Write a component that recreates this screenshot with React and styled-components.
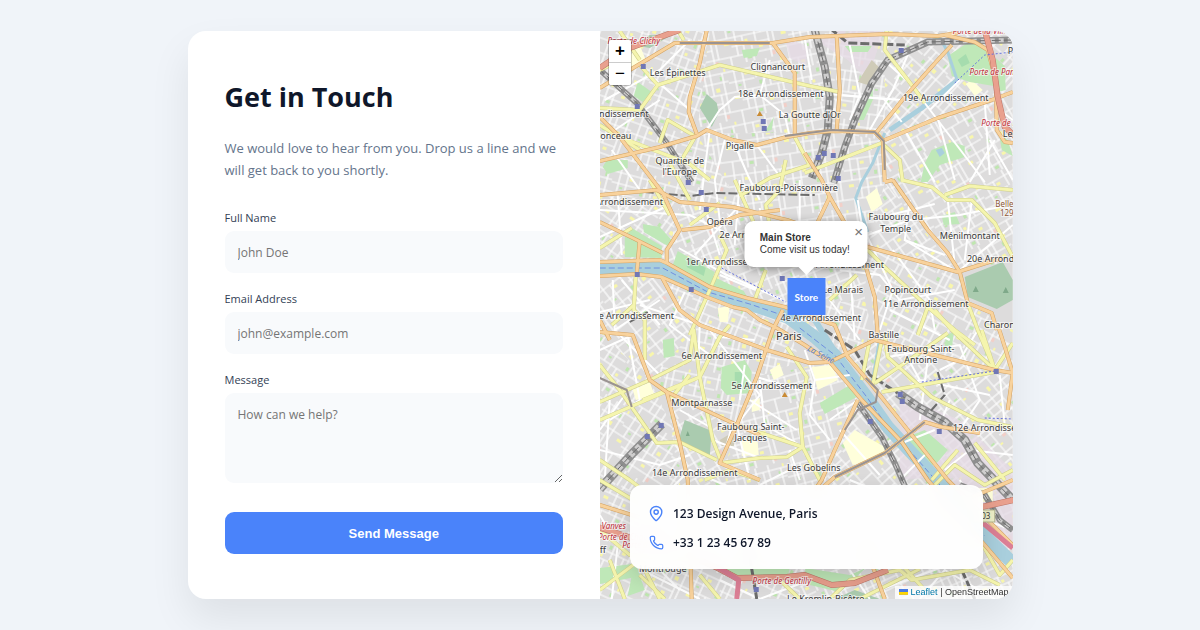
import React from 'react'
import styled, { createGlobalStyle } from 'styled-components'
import { MapPin, Phone } from 'lucide-react'

// roads and other map features, in map units
const majorRoads = [
  'M600 88L675 43L773 43L810 37L888 34L938 36L958 33',
  'M707 30L700 63L690 97L689 112L697 134',
  'M600 161L660 147L697 136L707 130L733 140L757 145L787 137L810 133L832 131L875 132L883 140L885 182',
  'M773 43L795 73L795 137',
  'M600 117L620 137L653 180L663 193L680 230L667 250L667 263',
  'M805 153L822 180L830 197L845 223M830 197L816 226',
  'M837 37L840 90L837 130',
  'M952 45L938 60L905 97L877 132',
  'M885 140L938 118L992 100L1013 92',
  'M945 35L975 42L988 50L996 80L997 130L1005 142L1013 143',
  'M600 195L657 190L680 202L733 207L787 220L868 247L958 272L1002 258',
  'M600 222L633 238L663 253M640 240L637 274',
  'M600 262L660 260L667 263L710 287L747 298L785 307L835 325L848 357L872 385L912 435L948 480L1013 545',
  'M600 276L637 274L662 277L707 297L733 307L747 310L760 320L777 328L805 345L830 362L862 400L902 442L928 480L985 545L1013 578',
  'M662 277L680 310L700 325L767 350L810 363L830 362L875 340L902 347L995 370L1013 373',
  'M682 230L710 227L740 215L780 210',
  'M893 180L928 230L948 253L960 272L968 303L992 313L997 330',
  'M865 263L875 297L878 335M885 182L893 180',
  'M600 332L633 335L650 380L667 392L733 423L760 435',
  'M667 392L680 443L688 480L692 600',
  'M783 310L773 330L757 377L737 425L720 463L760 480',
  'M858 400L835 450L822 480L815 490',
  'M820 490L835 477L885 453L925 422L942 427L980 433',
  'M998 325L1006 350L1013 373L1008 410',
  'M600 505L645 519M865 545L885 599M965 500L1013 480M600 320L610 340'
]
const minorRoads = [
  'M810 86L720 65L658 85L640 110L600 108M658 85L640 65M810 86L840 92',
  'M697 134L680 163M805 173L882 143L900 160L903 182',
  'M887 30L885 50L912 85L925 103M600 70L618 62M620 31L640 60',
  'M660 143L668 120L695 136M600 125L640 150M620 137L690 164L710 180',
  'M678 30L684 40M670 163L690 200M810 165L770 178L740 196',
  'M720 203L690 225M720 235L727 250L710 290L690 335',
  'M600 248L632 228M650 180L670 215M735 180L742 196L755 225',
  'M865 247L885 267L928 307L955 330L975 345M928 307L918 335',
  'M902 180L932 187L948 200L972 200L995 223L1013 257M945 195L970 186L1013 190',
  'M968 303L978 330L995 370L952 330L935 310M982 330L995 370L1013 343',
  'M600 402L650 380L690 360L694 330L700 377L713 440L722 463',
  'M600 420L700 377L720 337L730 325M600 365L620 390L657 443L680 442L717 460M643 400L700 377',
  'M722 463L760 458L787 457L803 447L800 413L807 377L787 347',
  'M600 460L630 480L650 495M803 447L820 480M670 400L690 375M737 425L803 447',
  'M885 333L888 357L932 397L978 420L1013 427M882 392L995 372M875 383L905 363L948 333',
  'M932 480L958 450M975 443L1005 480M870 340L862 380M882 340L873 385',
  'M636 276L634 310L645 320L645 360M634 305L612 325',
  'M600 480L650 510M600 530L630 555L690 560M640 575L665 599M600 590L640 560L660 599M610 560L625 599',
  'M700 575L720 599M830 599L850 580L900 570L912 580L970 570M860 599L920 569M905 568L925 590M970 570L1000 585M983 545L1000 575L1013 560',
  'M780 580L800 599M930 490L955 465L985 485L1013 470M705 480L730 470L760 480',
  'M770 225L766 205L780 190L786 160M795 137L810 165M857 275L830 300M766 270L755 300'
]
const streets = [
  'M600 140L660 100M612 150L640 190M640 66L690 110M690 40L660 70L605 100',
  'M707 130L720 110L735 97L760 95L785 115L790 137M735 97L800 92L840 95L884 99',
  'M725 140L715 180L720 220M733 140L748 175L760 200M757 145L790 190M770 60L760 95',
  'M710 130L700 210M805 38L812 80M850 45L860 95L850 120M884 99L902 122M840 95L902 100',
  'M925 103L985 182M960 80L930 110M938 118L955 180M985 102L990 175M995 140L970 182M905 130L935 182',
  'M884 60L912 85L905 97M870 130L893 90L910 50M1000 110L1013 120M990 140L1013 180',
  'M600 210L690 215L740 240M618 195L622 255M600 237L670 205M700 190L720 255M740 205L695 255',
  'M679 248L725 274L783 300M720 275L756 290M760 208L763 230M800 180L800 222M740 180L735 245',
  'M858 200L862 225L893 290L880 330M893 250L930 300L935 330M910 200L905 240L945 255M890 215L935 204',
  'M868 235L910 220L960 215L1010 205M905 240L958 272L1013 225M948 200L955 265M972 200L965 260',
  'M840 270L880 275L900 300L955 290M830 300L860 340M850 265L855 340M800 320L860 317M890 310L950 340',
  'M613 280L615 330L660 375M622 280L660 325M660 300L615 330M685 292L670 325L710 355M700 325L698 375',
  'M600 350L633 335M628 335L640 400L610 420M640 305L700 325M600 430L625 395M600 450L660 465L690 455',
  'M710 330L760 395L737 425M720 337L755 340M757 377L800 390M750 400L797 430M760 380L765 425L800 445',
  'M680 410L712 428M733 423L722 463M745 365L740 400M713 440L760 458M750 480L737 425M790 450L800 480',
  'M805 350L815 380L810 415L830 440M815 380L850 375M830 420L858 400M840 430L880 475M900 480L925 455',
  'M902 347L920 380L990 395M888 357L960 345L980 400L960 430M930 345L920 420M950 400L940 425',
  'M945 470L970 450L1013 455M905 442L935 430M1000 375L1005 425M920 380L898 393M978 330L960 360L940 370',
  'M600 515L618 545L612 599M640 569L700 599M650 560L680 590M720 580L760 599L810 580M850 570L870 599M880 590L940 568M920 599L945 570L995 599M960 570L965 599',
  'M610 400L605 480M650 510L690 470L760 500M760 485L790 470M850 480L900 500M960 480L985 520L1013 530M600 312L650 300'
]
const rails = [
  ['M598 68L637 103L667 143L692 182', 6],
  ['M815 30L825 67L830 97L828 130L822 153L812 178', 8],
  ['M1013 40L928 42L888 60L872 83L855 120L845 147L834 183', 7],
  ['M600 489L633 453L662 424', 9],
  ['M898 393L918 407L945 422L965 440L978 463L1013 500', 9],
  ['M858 403L882 437L895 463L906 488', 6],
  ['M960 485L985 495L1000 520L1013 530', 6],
  ['M830 28L848 43L905 45', 3],
  ['M938 372L945 395L930 412M630 322L648 312', 2],
  ['M645 192L690 196L715 193L815 195', 2],
  ['M825 330L855 350L870 375L898 393', 3],
  ['M962 570L975 599M748 545L757 599', 3]
]
const greens = [
  'M948 56L972 40L988 48L994 86L970 82L952 76Z',
  'M921 182L925 163L932 150L952 142L965 146L965 157L940 165L928 182Z',
  'M678 251L715 272L710 287L672 268Z',
  'M625 238L632 228L662 246L662 258L625 257Z',
  'M643 224L660 227L672 240L668 246L644 232Z',
  'M722 367L745 360L752 372L750 393L727 395L721 388Z',
  'M820 403L850 385L857 397L825 414Z',
  'M905 438L925 430L948 450L938 462L925 470Z',
  'M638 82L652 92L643 102L634 96Z',
  'M607 160L628 160L628 168L608 174L603 167Z',
  'M845 46L872 46L868 52L850 52Z',
  'M859 120L868 95L873 82L873 100L864 120Z',
  'M716 564L790 568L787 580L740 578Z',
  'M805 568L850 575L866 568L840 592L810 585Z',
  'M996 58L1005 66L1006 90L998 92Z',
  'M999 132L1008 140L1013 156L1002 150Z',
  'M942 216L955 212L960 224L944 225Z',
  'M600 568L632 564L636 577L600 584Z',
  'M628 596L635 560L645 590Z',
  'M742 50L760 48L757 56L744 58Z',
  'M663 340L674 338L675 356L664 358Z',
  'M706 290L748 298L744 291L712 276Z',
  'M946 335L954 332L952 350L945 350Z',
  'M765 132L774 117L772 130Z'
]
const cemeteries = [
  'M707 94L717 103L719 113L712 127L700 108Z',
  'M965 277L1003 262L1013 280L1013 300L997 309L985 304L968 297Z',
  'M685 420L712 431L710 456L679 440Z',
  'M835 599L855 590L880 599Z',
  'M635 45L650 35L670 36L650 48Z'
]
const campuses = [
  'M843 443L855 430L885 447L884 455L853 465Z',
  'M812 367L832 365L838 380L818 390Z',
  'M866 197L877 188L883 204L872 212Z',
  'M633 390L650 382L655 396L636 400Z',
  'M742 438L758 442L759 455L742 456Z',
  'M640 45L622 64L628 70L646 60Z',
  'M718 308L730 306L728 322L720 322Z',
  'M972 80L983 90L975 96L966 84Z',
  'M978 488L993 488L993 502L978 502Z',
  'M770 370L780 364L784 375L774 380Z',
  'M752 400L760 398L760 410L752 412Z'
]
const stations = [
  [643, 66], [637, 106], [763, 121], [764, 128], [901, 50], [818, 157], [824, 153], [833, 155],
  [688, 182], [701, 192], [706, 209], [637, 274], [691, 289], [838, 178], [647, 436], [661, 425],
  [900, 394], [902, 401], [870, 421], [939, 431], [996, 371], [756, 589], [782, 278]
]

// name, centre x, baseline y
const places = [
  ['Les Épinettes', 678, 76], ['Clignancourt', 778, 70], ['18e Arrondissement', 781, 97],
  ['La Goutte d\'Or', 810, 118], ['19e Arrondissement', 946, 101], ['17e Arrondissement', 606, 117],
  ['Monceau', 612, 139], ['Pigalle', 740, 149], ['Quartier de', 680, 164], ['l\'Europe', 680, 175],
  ['Faubourg-Poissonnière', 789, 191], ['8e Arrondissement', 623, 205], ['Opéra', 720, 225],
  ['2e Arrondissement', 760, 238], ['Faubourg du', 896, 220], ['Temple', 896, 232],
  ['Ménilmontant', 970, 239], ['20e Arrondissement', 1010, 262], ['1er Arrondissement', 728, 265],
  ['3e Arrondissement', 844, 268], ['Le Marais', 843, 293], ['Popincourt', 908, 293],
  ['11e Arrondissement', 926, 307], ['7e Arrondissement', 634, 319], ['4e Arrondissement', 821, 321],
  ['Charonne', 1005, 328], ['Bastille', 884, 338], ['Faubourg Saint-', 921, 352], ['Antoine', 921, 363],
  ['6e Arrondissement', 722, 359], ['5e Arrondissement', 772, 389], ['Montparnasse', 702, 406],
  ['Faubourg Saint-', 751, 430], ['Jacques', 751, 441], ['12e Arrondissement', 996, 431],
  ['Les Gobelins', 814, 471], ['14e Arrondissement', 695, 476], ['Montrouge', 663, 572],
  ['ff', 603, 553], ['Le', 1008, 137], ['Pré', 1015, 54], ['Le Kremlin-Bicêtre', 826, 602]
]
const gates = [
  ['Porte de Clichy', 634, 44], ['Porte de la Villette', 985, 34], ['Porte de Pantin', 997, 75],
  ['Porte de Pré', 1003, 126], ['Vanves', 614, 529], ['Porte de Châtillon', 630, 540],
  ['Porte de Gentilly', 782, 584], ['Porte d\'Orléans', 650, 548]
]

// small street grids, one direction for each quarter of the city
const quarters = [
  [20, 'M600 31H710L697 134L600 161Z'],
  [-12, 'M710 31H825L828 132L697 134Z'],
  [8, 'M825 31H885V140L828 132Z'],
  [42, 'M885 31H1013V95L885 140Z'],
  [-30, 'M885 140L1013 95V260L960 272L885 182Z'],
  [15, 'M600 161L697 134L740 205L600 195Z'],
  [-8, 'M697 134L828 132L885 140V182L868 247L740 205Z'],
  [35, 'M600 195L680 202L667 263H600Z'],
  [-22, 'M680 202L868 247L865 300L785 307L667 263Z'],
  [28, 'M868 247L958 272L968 303L1013 330V373L875 340Z'],
  [-35, 'M885 182L958 272L868 247Z'],
  [18, 'M785 307L865 300L875 340L848 357Z'],
  [-38, 'M600 276L662 277L700 325L650 380L600 332Z'],
  [22, 'M662 277L785 312L800 362L700 325Z'],
  [12, 'M700 325L800 362L757 377L737 425L667 392L650 380Z'],
  [33, 'M600 332L650 380L680 443V490H600Z'],
  [-30, 'M667 392L737 425L720 490H680Z'],
  [-15, 'M737 425L757 377L830 362L858 400L822 490H720Z'],
  [48, 'M858 400L822 490H935Z'],
  [50, 'M848 357L875 340L1013 373V500L948 480Z'],
  [25, 'M600 490H800V599H600Z'],
  [-25, 'M800 490H1013V599H800Z']
]

function CityMap() {
  return (
    <MapSvg viewBox="600 31 413 568" preserveAspectRatio="xMidYMid slice" aria-label="Map of Paris" role="img">
      <defs>
        {quarters.map(([angle], i) => (
          <pattern key={i} id={`quarter${i}`} width="58" height="54" patternUnits="userSpaceOnUse" patternTransform={`rotate(${angle})`}>
            <path d="M0 6H34L58 6M0 17H26M32 15H58M0 27H58M10 36H48M0 46H58M7 0V27M15 6V46M22 27V54M28 0V17M35 6V36M41 0V27M48 27V54M53 6V46M7 46V54M30 36V54" fill="none" stroke="#fff" strokeWidth="1.2" />
            <path d="M17 9h4v3h-4zM44 20h4v4h-4zM3 31h5v3h-5zM37 39h4v3h-4zM24 31h3v3h-3zM55 2h2v3h-2z" fill="#f8f6ac" />
            <path d="M30 20h3v4h-3zM50 9h2v4h-2zM24 48h4v3h-4zM9 20h3v2h-3z" fill="#bfe6b0" />
            <path d="M49 48h3v4h-3z" fill="#f2cfc8" />
          </pattern>
        ))}
      </defs>
      <rect x="600" y="31" width="413" height="568" fill="#dddcdc" />
      {quarters.map(([, d], i) => <path key={i} d={d} fill={`url(#quarter${i})`} />)}
      <path d="M785 38L808 46L806 66L790 58ZM818 42L838 30H884L868 80L848 60ZM900 480L925 478L1000 560L1013 540V470L960 420L900 395Z" fill="#e6dbe6" opacity=".75" />
      <path d="M868 85L880 68L872 60L858 82ZM720 440L737 430L734 446L722 446Z" fill="#cfcbb8" />
      {campuses.map(d => <path key={d} d={d} fill="#ffffdb" />)}
      {greens.map(d => <path key={d} d={d} fill="#bfe8b8" />)}
      {cemeteries.map(d => <path key={d} d={d} fill="#aacbaf" />)}
      <path d="M958 60l8 -6l4 9l-8 4zM735 372h9v12h-9zM688 258l18 10l-2 8l-17 -9z" fill="#a6dcae" />
      <path d="M936 150l6 -2l3 5l-5 4z" fill="#a9cfdd" />

      <g fill="none" stroke="#a9cfdd" strokeLinejoin="round">
        <path d="M598 268H663L708 292L750 304L788 317L815 337L835 355L867 397L888 427L912 453L938 480L985 536L1013 563" strokeWidth="13" />
        <path d="M785 308L815 320L838 356" strokeWidth="6" />
        <path d="M958 80L922 108L890 130" strokeWidth="5" />
        <path d="M885 133L873 163L862 182L856 198L868 232M938 34L948 52L958 82M880 338L872 385" strokeWidth="3" />
      </g>
      <path d="M600 268H663L708 292L750 304L788 317M800 328L835 355L867 397L888 427L912 453L985 536" fill="none" stroke="#6f8fe0" strokeWidth="1" strokeDasharray="6 3" />

      <g fill="none" stroke="#fff" strokeWidth="2">
        {streets.map(d => <path key={d} d={d} />)}
      </g>
      {rails.map(([d, w]) => (
        <g key={d} fill="none">
          {w > 5 && <path d={d} stroke="#8e8e8e" strokeWidth={w} />}
          {w > 5 && <path d={d} stroke="#cfcece" strokeWidth={w - 3} strokeDasharray="5 4" />}
          <path d={d} stroke="#6c6c6c" strokeWidth={w > 5 ? 1 : w} strokeDasharray="9 3" />
        </g>
      ))}
      <g fill="none" strokeLinejoin="round">
        {minorRoads.map(d => <path key={d} d={d} stroke="#cfcf8c" strokeWidth="4" />)}
        {minorRoads.map(d => <path key={d} d={d} stroke="#f5f5ae" strokeWidth="3" />)}
        {majorRoads.map(d => <path key={d} d={d} stroke="#d3a262" strokeWidth="4" />)}
        {majorRoads.map(d => <path key={d} d={d} stroke="#f8d29c" strokeWidth="3" />)}
        <path d="M985 30L993 60L998 97L1005 127L1015 136M600 68L630 48L680 30M598 527L632 538M982 507L1014 500M700 560L718 568L737 578L787 577L805 575L832 585L855 583L888 570" stroke="#bd7568" strokeWidth="6" />
        <path d="M985 30L993 60L998 97L1005 127L1015 136M600 68L630 48L680 30M598 527L632 538M982 507L1014 500M700 560L718 568L737 578L787 577L805 575L832 585L855 583L888 570" stroke="#e9a08e" strokeWidth="5" />
        <path d="M737 599L739 580L716 566M982 522L1013 548" stroke="#dc7f95" strokeWidth="5" />
        <path d="M785 136L832 130L875 132L884 141L885 170M835 477L885 453L925 422M866 378L878 390L876 402L858 410L845 430M600 378L627 390L632 407M680 43H770" stroke="#9a9391" strokeWidth="2" />
        <path d="M955 83L985 55L1013 52M722 268L786 302M922 382L995 371M985 418L1013 419" stroke="#6470df" strokeWidth="1" strokeDasharray="2 2" />
      </g>

      {stations.map(([x, y]) => <rect key={`${x}-${y}`} x={x - 2} y={y - 2} width="5" height="5" fill="#7077b5" />)}
      <path d="M757 116l3 -5l3 5zM782 397l3 -5l3 5z" fill="#c98b35" />
      <path d="M686 436l2 -5l2 5zM973 292l3 -6l3 6zM1003 293l3 -6l3 6z" fill="#7fa98a" />
      <rect x="974" y="510" width="21" height="12" fill="#eef0c8" stroke="#b4b690" />
      <RoadText x="986" y="519">03</RoadText>

      {places.map(([name, x, y]) => <PlaceText key={`${name}${y}`} x={x} y={y}>{name}</PlaceText>)}
      <PlaceText x="789" y="340" $big>Paris</PlaceText>
      {gates.map(([name, x, y]) => <GateText key={name} x={x} y={y}>{name}</GateText>)}
      <PeakText x="1012" y="207">Belleville</PeakText>
      <PeakText x="1007" y="216">129</PeakText>
      <WaterText x="820" y="357" transform="rotate(28 820 357)">La Seine</WaterText>
    </MapSvg>
  )
}

function App() {
  return (
    <Page>
      <GlobalStyle />
      <Card>
        <FormSide>
          <Title>Get in Touch</Title>
          <Intro>We would love to hear from you. Drop us a line and we will get back to you shortly.</Intro>
          <form onSubmit={e => e.preventDefault()}>
            <Field>
              <Label htmlFor="name">Full Name</Label>
              <Input id="name" type="text" placeholder="John Doe" />
            </Field>
            <Field>
              <Label htmlFor="email">Email Address</Label>
              <Input id="email" type="email" placeholder="john@example.com" />
            </Field>
            <Field>
              <Label htmlFor="message">Message</Label>
              <TextArea id="message" placeholder="How can we help?" />
            </Field>
            <Button type="submit">Send Message</Button>
          </form>
        </FormSide>

        <MapSide>
          <CityMap />
          <ZoomControl>
            <ZoomButton type="button" aria-label="Zoom in">+</ZoomButton>
            <ZoomButton type="button" aria-label="Zoom out">−</ZoomButton>
          </ZoomControl>
          <Pin>
            <Popup>
              <Close type="button" aria-label="Close popup">×</Close>
              <strong>Main Store</strong>
              <span>Come visit us today!</span>
            </Popup>
            <Marker>Store</Marker>
          </Pin>
          <InfoCard>
            <InfoRow>
              <InfoIcon><MapPin width={15} height={17} viewBox="2 0 21 24" strokeWidth={2} /></InfoIcon>
              123 Design Avenue, Paris
            </InfoRow>
            <InfoRow>
              <InfoIcon><Phone size={15} strokeWidth={2} /></InfoIcon>
              +33 1 23 45 67 89
            </InfoRow>
          </InfoCard>
          <Attribution>
            <Flag viewBox="0 0 12 8" aria-hidden="true">
              <path fill="#4C7BE1" d="M0 0h12v4H0z" />
              <path fill="#FFD500" d="M0 4h12v3H0z" />
              <path fill="#E0BC00" d="M0 7h12v1H0z" />
            </Flag>
            <a href="#leaflet">Leaflet</a> | OpenStreetMap
          </Attribution>
        </MapSide>
      </Card>
    </Page>
  )
}

export default App

//styling:
const GlobalStyle = createGlobalStyle`
  * {
    box-sizing: border-box;
  }
  body {
    margin: 0;
    background-color: #f0f4f9;
    font-family: 'Segoe UI', 'Open Sans', 'Noto Sans', sans-serif;
  }
`
const Page = styled.main`
  min-height: 100vh;
  display: flex;
  align-items: center;
  justify-content: center;
  padding: 24px;
`
const Card = styled.div`
  display: grid;
  grid-template-columns: 1fr 1fr;
  width: 100%;
  max-width: 825px;
  border-radius: 18px;
  overflow: hidden;
  background-color: #ffffff;
  box-shadow: 0 20px 40px rgba(0, 0, 0, 0.08);
`
const FormSide = styled.section`
  padding: 45px 37px;
`
const Title = styled.h1`
  margin: 0 0 19px;
  font-size: 27px;
  line-height: 42px;
  font-weight: 700;
  color: #0f172a;
`
const Intro = styled.p`
  margin: 0 0 29px;
  font-size: 13px;
  line-height: 22px;
  color: #64748b;
`
const Field = styled.div`
  display: flex;
  flex-direction: column;
  gap: 5px;
  margin-bottom: 18px;
`
const Label = styled.label`
  font-size: 11px;
  line-height: 16px;
  font-weight: 500;
  color: #334155;
`
const Input = styled.input`
  width: 100%;
  height: 42px;
  padding: 0 13px;
  border: none;
  border-radius: 9px;
  background-color: #f8fafc;
  font-family: inherit;
  font-size: 12px;
  color: #0f172a;
  &::placeholder {
    color: #757575;
  }
`
const TextArea = styled(Input).attrs({ as: 'textarea' })`
  height: 90px;
  padding: 13px;
  resize: vertical;
`
const Button = styled.button`
  width: 100%;
  height: 42px;
  margin-top: 11px;
  border: none;
  border-radius: 9px;
  background-color: #4a83fa;
  color: #ffffff;
  font-family: 'Liberation Sans', Arial, sans-serif;
  font-size: 13px;
  font-weight: 700;
  cursor: pointer;
`
const MapSide = styled.section`
  position: relative;
  overflow: hidden;
  font-family: 'Liberation Sans', Arial, sans-serif;
`
const MapSvg = styled.svg`
  position: absolute;
  inset: 0;
  width: 100%;
  height: 100%;
`
const PlaceText = styled.text`
  font-family: 'Noto Sans', sans-serif;
  font-size: ${({ $big }) => ($big ? '11px' : '9px')};
  text-anchor: middle;
  fill: #3a3a3a;
  stroke: rgba(255, 255, 255, 0.6);
  stroke-width: 2px;
  paint-order: stroke;
`
const GateText = styled(PlaceText)`
  font-size: 8px;
  font-style: italic;
  fill: #c0303c;
`
const PeakText = styled(PlaceText)`
  font-size: 8px;
  fill: #8f5a36;
`
const RoadText = styled(PlaceText)`
  font-size: 8px;
  stroke: none;
`
const WaterText = styled(PlaceText)`
  font-size: 8px;
  font-style: italic;
  fill: #5b86cf;
  stroke: none;
`
const ZoomControl = styled.div`
  position: absolute;
  top: 8px;
  left: 8px;
  display: flex;
  flex-direction: column;
  border: 1px solid rgba(0, 0, 0, 0.2);
  border-radius: 3px;
  overflow: hidden;
`
const ZoomButton = styled.button`
  width: 22px;
  height: 22px;
  padding: 0;
  border: none;
  background-color: #ffffff;
  color: #000000;
  font-family: 'Liberation Sans', Arial, sans-serif;
  font-size: 17px;
  line-height: 22px;
  font-weight: 700;
  cursor: pointer;
  & + & {
    height: 23px;
    border-top: 1px solid #cccccc;
    font-weight: 400;
  }
`
const Pin = styled.div`
  position: absolute;
  left: 50%;
  bottom: 50%;
  transform: translateX(-50%);
  display: flex;
  flex-direction: column;
  align-items: center;
  gap: 11px;
`
const Popup = styled.div`
  position: relative;
  display: flex;
  flex-direction: column;
  width: 123px;
  padding: 11px 15px;
  border-radius: 9px;
  background-color: #ffffff;
  box-shadow: 0 2px 10px rgba(0, 0, 0, 0.4);
  color: #333333;
  font-size: 10px;
  line-height: 12px;
  white-space: nowrap;
  &::after {
    content: '';
    position: absolute;
    top: 100%;
    left: 50%;
    margin-left: -8px;
    border: 8px solid transparent;
    border-top-color: #ffffff;
    border-bottom: none;
  }
`
const Close = styled.button`
  position: absolute;
  top: 2px;
  right: 0;
  width: 18px;
  height: 18px;
  padding: 0;
  border: none;
  background: none;
  color: #757575;
  font-family: 'Liberation Sans', Arial, sans-serif;
  font-size: 15px;
  line-height: 18px;
  cursor: pointer;
`
const Marker = styled.div`
  display: flex;
  align-items: center;
  justify-content: center;
  width: 38px;
  height: 37px;
  background-color: #4a83fa;
  color: #ffffff;
  font-family: Lato, sans-serif;
  font-size: 10px;
  font-weight: 700;
`
const InfoCard = styled.div`
  position: absolute;
  left: 30px;
  right: 30px;
  bottom: 30px;
  display: flex;
  flex-direction: column;
  gap: 11px;
  padding: 19px 19px 18px;
  border-radius: 12px;
  background-color: rgba(255, 255, 255, 0.95);
  backdrop-filter: blur(8px);
  box-shadow: 0 8px 24px rgba(0, 0, 0, 0.15);
  font-family: 'Segoe UI', 'Open Sans', 'Noto Sans', sans-serif;
`
const InfoRow = styled.div`
  display: flex;
  align-items: center;
  gap: 8px;
  height: 18px;
  font-size: 12px;
  font-weight: 600;
  color: #0f172a;
`
const InfoIcon = styled.span`
  display: flex;
  flex: 0 0 16px;
  color: #4a83fa;
`
const Attribution = styled.div`
  position: absolute;
  right: 0;
  bottom: 0;
  padding: 0 4px;
  background-color: rgba(255, 255, 255, 0.8);
  color: #333333;
  font-size: 9px;
  line-height: 13px;
  a {
    color: #0078a8;
    text-decoration: none;
  }
`
const Flag = styled.svg`
  width: 9px;
  height: 6px;
  margin-right: 3px;
`
